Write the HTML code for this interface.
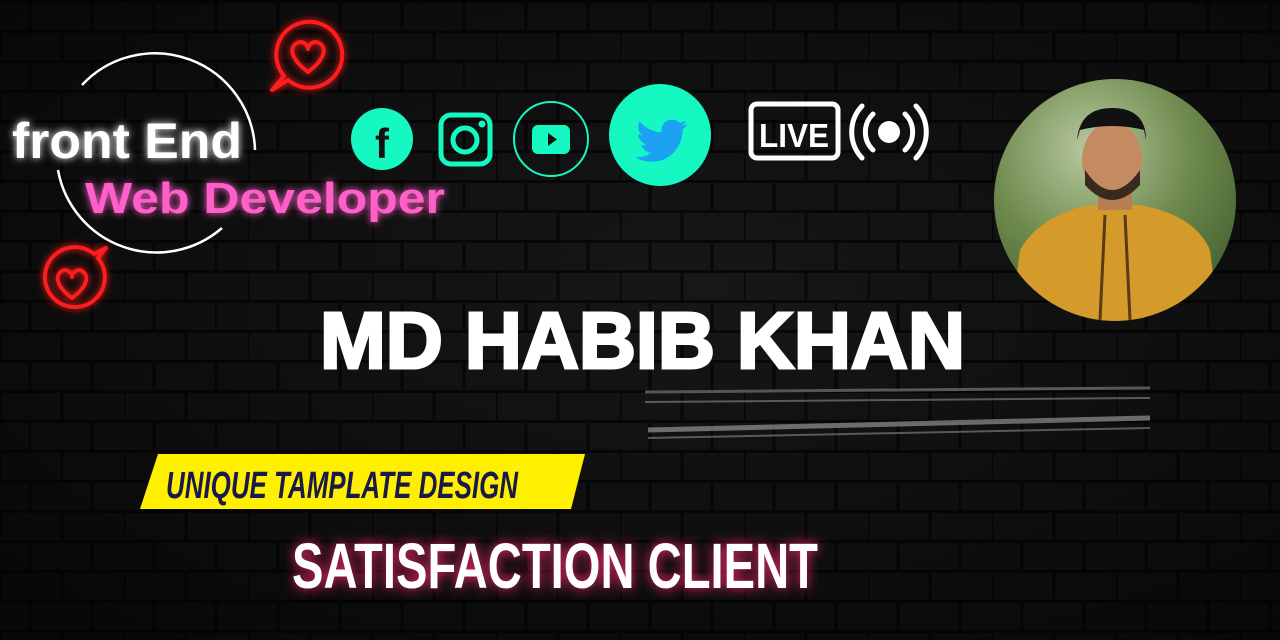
<!DOCTYPE html>
<html><head><meta charset="utf-8"><style>
html,body{margin:0;padding:0}
body{width:1280px;height:640px;overflow:hidden;position:relative;background:#0c0c0c;font-family:"Liberation Sans",sans-serif}
svg{position:absolute;left:0;top:0}
</style></head><body>
<svg width="1280" height="640" viewBox="0 0 1280 640">
<defs>
<pattern id="brick" width="124" height="60" patternUnits="userSpaceOnUse">
<rect width="124" height="60" fill="#1b1b1b"/>
<g fill="none" stroke="#0a0a0a" stroke-width="3">
<line x1="0" y1="1.5" x2="124" y2="1.5"/><line x1="0" y1="31.5" x2="124" y2="31.5"/>
<line x1="30" y1="0" x2="30" y2="30"/><line x1="92" y1="0" x2="92" y2="30"/>
<line x1="0" y1="30" x2="0" y2="60"/><line x1="62" y1="30" x2="62" y2="60"/>
</g>
</pattern>
<radialGradient id="vig" cx="55%" cy="45%" r="70%"><stop offset="0" stop-color="#000" stop-opacity=".15"/><stop offset="1" stop-color="#000" stop-opacity=".7"/></radialGradient>
<filter id="glow" x="-20%" y="-50%" width="140%" height="200%"><feGaussianBlur stdDeviation="4" result="b"/><feMerge><feMergeNode in="b"/><feMergeNode in="SourceGraphic"/></feMerge></filter>
<filter id="glow2" x="-20%" y="-50%" width="140%" height="200%"><feGaussianBlur stdDeviation="6" result="b"/><feMerge><feMergeNode in="b"/><feMergeNode in="b"/><feMergeNode in="SourceGraphic"/></feMerge></filter>
<clipPath id="pc"><circle cx="1115" cy="200" r="121"/></clipPath>
<radialGradient id="bgp" cx="40%" cy="30%" r="80%"><stop offset="0" stop-color="#b8c9a0"/><stop offset=".5" stop-color="#6f8a4e"/><stop offset="1" stop-color="#3d5a2a"/></radialGradient>
</defs>
<rect width="1280" height="640" fill="url(#brick)"/>
<rect width="1280" height="640" fill="url(#vig)"/>
<!-- streaks -->
<g opacity=".6" stroke="#8a8a8a">
<line x1="645" y1="392" x2="1150" y2="388" stroke-width="3"/>
<line x1="645" y1="402" x2="1150" y2="398" stroke-width="2"/>
<line x1="648" y1="430" x2="1150" y2="418" stroke-width="5" stroke="#aaa"/>
<line x1="648" y1="438" x2="1150" y2="428" stroke-width="2"/>
</g>
<!-- circle arc -->
<path d="M82 85 A100 100 0 0 1 255 150" fill="none" stroke="#fff" stroke-width="2.5"/>
<path d="M58 170 A100 100 0 0 0 222 228" fill="none" stroke="#fff" stroke-width="2.5"/>
<!-- hearts -->
<g fill="none" stroke="#ff1a1a" stroke-width="4" filter="url(#glow)" stroke-linejoin="round">
<path d="M288 80 A33 33 0 1 0 284 76 L272 90 Z"/>
<path d="M308 72 C292 60 288 48 297 43 C303 40 308 45 308 49 C308 45 313 40 319 43 C328 48 324 60 308 72Z"/>
<path d="M98 258 A30 30 0 1 1 94 254 L106 248 Z"/>
<path d="M72 298 C57 287 54 276 62 271 C67 268 72 273 72 277 C72 273 77 268 82 271 C90 276 87 287 72 298Z"/>
</g>
<!-- text -->
<text x="12" y="158" font-size="50" font-weight="bold" fill="#fff" textLength="230" lengthAdjust="spacingAndGlyphs" filter="url(#glow)">front End</text>
<text x="85" y="213" font-size="44" font-weight="bold" fill="#ff5fc8" textLength="360" lengthAdjust="spacingAndGlyphs" filter="url(#glow)">Web Developer</text>
<!-- icons -->
<circle cx="382" cy="139" r="31" fill="#15f8c2"/>
<text x="382" y="158" font-size="42" font-weight="bold" fill="#111" text-anchor="middle">f</text>
<rect x="441" y="115" width="49" height="49" rx="10" fill="none" stroke="#15f8c2" stroke-width="5"/>
<circle cx="465" cy="140" r="12" fill="none" stroke="#15f8c2" stroke-width="5"/>
<circle cx="482" cy="124" r="3.5" fill="#15f8c2"/>
<circle cx="551" cy="139" r="37" fill="none" stroke="#15f8c2" stroke-width="2"/>
<rect x="532" y="125" width="38" height="29" rx="6" fill="#15f8c2"/>
<path d="M548 133 L557 139.5 L548 146Z" fill="#111"/>
<circle cx="660" cy="135" r="51" fill="#15f8c2"/>
<g transform="translate(660 137) scale(0.75) translate(-658 -140)">
<path d="M695 123 c-3 1-5 2-8 2 3-2 5-4 6-7-3 2-6 3-9 3-3-3-6-4-10-4-8 0-14 6-14 14 0 1 0 2 0 3-12-1-22-6-29-15-1 2-2 5-2 7 0 5 2 9 6 12-2 0-4-1-6-2 0 7 5 12 11 14-1 0-2 1-4 1-1 0-2 0-3 0 2 5 7 10 13 10-5 4-11 6-18 6-1 0-2 0-3 0 6 4 14 6 22 6 26 0 41-22 41-41v-2c3-2 5-4 7-7z" fill="#1da1f2"/>
</g>
<rect x="751" y="104" width="87" height="54" rx="6" fill="none" stroke="#fff" stroke-width="5"/>
<text x="794" y="147" font-size="33" font-weight="bold" fill="#fff" text-anchor="middle" textLength="70" lengthAdjust="spacingAndGlyphs">LIVE</text>
<circle cx="889" cy="132" r="11" fill="#fff"/>
<g fill="none" stroke="#fff" stroke-width="5" stroke-linecap="round">
<path d="M873 114 A25 25 0 0 0 873 150"/><path d="M905 114 A25 25 0 0 1 905 150"/>
<path d="M862 106 A38 38 0 0 0 862 158"/><path d="M916 106 A38 38 0 0 1 916 158"/>
</g>
<!-- photo -->
<g clip-path="url(#pc)">
<rect x="990" y="75" width="250" height="250" fill="url(#bgp)"/>
<path d="M1010 330 L1020 250 Q1040 215 1090 205 L1140 205 Q1195 215 1210 250 L1220 330Z" fill="#d49a2a"/>
<path d="M1105 215 L1100 320 M1125 215 L1130 320" stroke="#5a3a12" stroke-width="3"/>
<rect x="1098" y="170" width="34" height="40" fill="#b77d55"/>
<ellipse cx="1112" cy="160" rx="30" ry="38" fill="#c48a62"/>
<path d="M1085 170 Q1112 210 1140 170 L1140 185 Q1112 215 1085 185Z" fill="#3a2a1e"/>
<path d="M1077 140 Q1080 108 1112 108 Q1146 108 1146 140 L1144 130 Q1112 122 1080 130Z" fill="#111"/>
</g>
<!-- name -->
<text x="320" y="368" font-size="80" font-weight="bold" fill="#fff" textLength="645" lengthAdjust="spacingAndGlyphs" stroke="#fff" stroke-width="3">MD HABIB KHAN</text>
<!-- banner -->
<path d="M158 454 L585 454 L571 509 L140 509Z" fill="#fff000"/>
<text x="166" y="498" font-size="38" font-weight="bold" font-style="italic" fill="#1a1a4a" textLength="352" lengthAdjust="spacingAndGlyphs">UNIQUE TAMPLATE DESIGN</text>
<text x="292" y="588" font-size="64" font-weight="bold" fill="#fff" textLength="526" lengthAdjust="spacingAndGlyphs" style="filter:drop-shadow(0 0 6px #ff2a6a)">SATISFACTION CLIENT</text>
</svg>
</body></html>
